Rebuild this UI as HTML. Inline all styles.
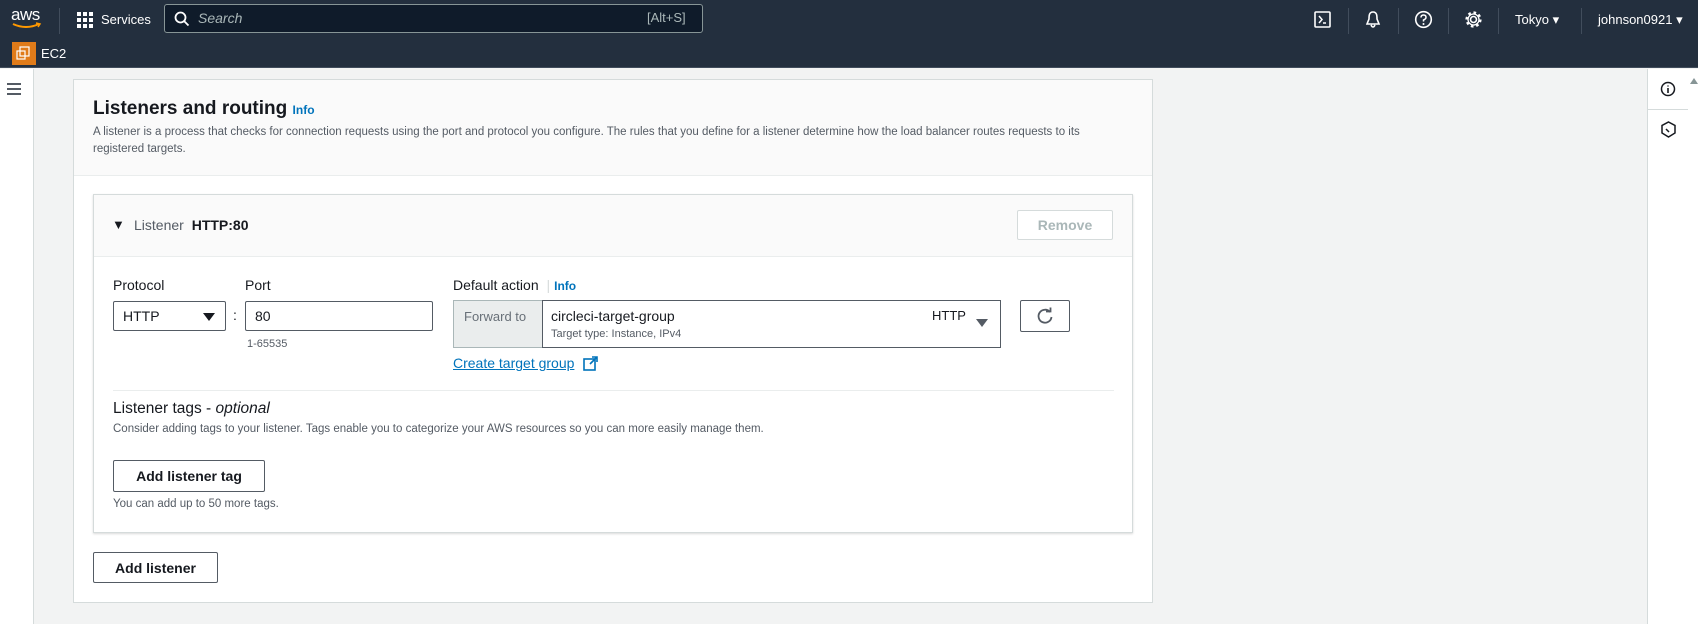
<!DOCTYPE html>
<html><head><meta charset="utf-8"><style>
*{box-sizing:border-box;margin:0;padding:0}
body{width:1698px;height:624px;overflow:hidden;background:#f2f3f3;font-family:"Liberation Sans",sans-serif;color:#16191f;position:relative;font-size:14px}
.a{position:absolute}
.nav{left:0;top:0;width:1698px;height:43px;background:#232f3e}
.nav2{left:0;top:43px;width:1698px;height:25px;background:#232f3e;border-bottom:1px solid #414d5c}
.w{color:#fff}
.btn{position:absolute;border:1px solid #545b64;border-radius:2px;background:#fff;font-weight:bold;color:#545b64;display:flex;align-items:center;justify-content:center;font-size:14px}
.lbl{font-size:14px;color:#16191f}
.inp{position:absolute;border:1px solid #aab7b8;border-radius:2px;background:#fff;padding-left:9px;display:flex;align-items:center;font-size:14px}
.info{color:#0073bb;font-weight:bold;font-size:12px}
.sep{position:absolute;width:1px;height:26px;background:#414d5c;top:8px}
</style></head><body>
<div class="a nav"></div>
<div class="a nav2"></div>
<div class="a w" style="left:11px;top:5px;font-size:17px;letter-spacing:-0.5px">aws</div>
<svg class="a" style="left:11px;top:22px" width="32" height="8"><path d="M2 2 Q15 8 28 2" stroke="#ff9900" stroke-width="2" fill="none"/><path d="M25 1 L29 2 L27 5" stroke="#ff9900" stroke-width="1.5" fill="none"/></svg>
<div class="sep" style="left:59px"></div>
<svg class="a" style="left:77px;top:12px" width="16" height="16" fill="#fff"><rect x="0" y="0" width="4" height="4"/><rect x="6" y="0" width="4" height="4"/><rect x="12" y="0" width="4" height="4"/><rect x="0" y="6" width="4" height="4"/><rect x="6" y="6" width="4" height="4"/><rect x="12" y="6" width="4" height="4"/><rect x="0" y="12" width="4" height="4"/><rect x="6" y="12" width="4" height="4"/><rect x="12" y="12" width="4" height="4"/></svg>
<div class="a w" style="left:101px;top:12px;font-size:13px">Services</div>
<div class="a" style="left:164px;top:4px;width:539px;height:29px;border:1px solid #879596;border-radius:3px;background:#0f1b2a"></div>
<svg class="a" style="left:174px;top:11px" width="16" height="16"><circle cx="6.5" cy="6.5" r="5" stroke="#fff" stroke-width="1.8" fill="none"/><path d="M10 10 L14.5 14.5" stroke="#fff" stroke-width="1.8"/></svg>
<div class="a" style="left:198px;top:10px;color:#aab7b8;font-style:italic;font-size:14px">Search</div>
<div class="a" style="left:647px;top:10px;color:#aab7b8;font-size:13px">[Alt+S]</div>
<svg class="a" style="left:1314px;top:11px" width="18" height="18"><rect x="1" y="1" width="15" height="15" stroke="#fff" stroke-width="1.6" fill="none" rx="1"/><path d="M5 5 L8 8.5 L5 12 M9 12 H12" stroke="#fff" stroke-width="1.5" fill="none"/></svg>
<div class="sep" style="left:1348px"></div>
<svg class="a" style="left:1364px;top:10px" width="18" height="20"><path d="M9 2 C5 2 5 6 5 9 L3 14 H15 L13 9 C13 6 13 2 9 2 Z M7 15 Q9 19 11 15" stroke="#fff" stroke-width="1.6" fill="none"/></svg>
<div class="sep" style="left:1398px"></div>
<svg class="a" style="left:1414px;top:10px" width="19" height="19"><circle cx="9.5" cy="9.5" r="7.8" stroke="#fff" stroke-width="1.6" fill="none"/><path d="M7 7.5 Q7 5 9.5 5 Q12 5 12 7.3 Q12 9 9.5 10 V11.5" stroke="#fff" stroke-width="1.5" fill="none"/><circle cx="9.5" cy="14" r="1" fill="#fff"/></svg>
<div class="sep" style="left:1448px"></div>
<svg class="a" style="left:1464px;top:10px" width="19" height="19"><circle cx="9.5" cy="9.5" r="3" stroke="#fff" stroke-width="1.6" fill="none"/><circle cx="9.5" cy="9.5" r="6.8" stroke="#fff" stroke-width="2.6" stroke-dasharray="2.6 2.7" fill="none"/><circle cx="9.5" cy="9.5" r="5.5" stroke="#fff" stroke-width="1.3" fill="none"/></svg>
<div class="sep" style="left:1498px"></div>
<div class="a w" style="left:1515px;top:12px;font-size:13px">Tokyo ▾</div>
<div class="sep" style="left:1581px"></div>
<div class="a w" style="left:1598px;top:12px;font-size:13px">johnson0921 ▾</div>
<div class="a" style="left:12px;top:42px;width:24px;height:23px;background:#e07b19"></div>
<svg class="a" style="left:15px;top:45px" width="18" height="17"><rect x="5" y="2" width="9" height="9" stroke="#fff" stroke-width="1.2" fill="none"/><rect x="2" y="6" width="8" height="8" stroke="#fff" stroke-width="1.2" fill="none"/></svg>
<div class="a w" style="left:41px;top:46px;font-size:13px">EC2</div>

<div class="a" style="left:0;top:69px;width:34px;height:555px;background:#fff;border-right:1px solid #d5dbdb"></div>
<div class="a" style="left:7px;top:83px;width:14px;height:2px;background:#545b64;box-shadow:0 5px 0 #545b64,0 10px 0 #545b64"></div>
<div class="a" style="left:1647px;top:69px;width:51px;height:555px;background:#fff;border-left:1px solid #d5dbdb"></div>
<div class="a" style="left:1648px;top:109px;width:40px;height:1px;background:#d5dbdb"></div>
<svg class="a" style="left:1660px;top:81px" width="16" height="16"><circle cx="8" cy="8" r="6.5" stroke="#16191f" stroke-width="1.5" fill="none"/><path d="M8 7 V12 M8 4.5 V5.5" stroke="#16191f" stroke-width="1.6"/></svg>
<svg class="a" style="left:1661px;top:121px" width="15" height="17"><path d="M7.5 1 L14 4.5 V12 L7.5 16 L1 12 V4.5 Z" stroke="#16191f" stroke-width="1.5" fill="none"/><path d="M5 8 L8 11" stroke="#16191f" stroke-width="1.5"/></svg>
<div class="a" style="left:1690px;top:78px;width:0;height:0;border-left:4px solid transparent;border-right:4px solid transparent;border-bottom:6px solid #879596"></div>

<div class="a" style="left:73px;top:79px;width:1080px;height:524px;background:#fff;border:1px solid #d5dbdb"></div>
<div class="a" style="left:74px;top:80px;width:1078px;height:96px;background:#fafafa;border-bottom:1px solid #eaeded"></div>
<div class="a" style="left:93px;top:98px;font-size:19px;font-weight:bold">Listeners and routing <span class="info" style="font-size:12px">Info</span></div>
<div class="a" style="left:93px;top:124px;font-size:11.5px;line-height:17px;width:995px;color:#545b64">A listener is a process that checks for connection requests using the port and protocol you configure. The rules that you define for a listener determine how the load balancer routes requests to its registered targets.</div>

<div class="a" style="left:93px;top:194px;width:1040px;height:339px;border:1px solid #d5dbdb;box-shadow:0 1px 2px rgba(0,0,0,.15);background:#fff"></div>
<div class="a" style="left:94px;top:195px;width:1038px;height:62px;background:#fafafa;border-bottom:1px solid #eaeded"></div>
<div class="a" style="left:112px;top:217px;font-size:13px">▼</div>
<div class="a" style="left:134px;top:217px;font-size:14px;color:#545b64">Listener <b style="color:#16191f;margin-left:4px">HTTP:80</b></div>
<div class="btn" style="left:1017px;top:210px;width:96px;height:30px;border-color:#d5dbdb;color:#aab7b8">Remove</div>

<div class="a lbl" style="left:113px;top:277px">Protocol</div>
<div class="a lbl" style="left:245px;top:277px">Port</div>
<div class="inp" style="left:113px;top:301px;width:113px;height:30px;border-color:#545b64">HTTP</div>
<div class="a" style="left:203px;top:313px;border-left:6px solid transparent;border-right:6px solid transparent;border-top:8px solid #16191f"></div>
<div class="a" style="left:233px;top:307px;font-size:14px">:</div>
<div class="inp" style="left:245px;top:301px;width:188px;height:30px;border-color:#545b64">80</div>
<div class="a" style="left:247px;top:338px;font-size:11px;color:#545b64">1-65535</div>

<div class="a lbl" style="left:453px;top:277px">Default action <span style="color:#d5dbdb;margin:0 4px">|</span><span class="info">Info</span></div>
<div class="a" style="left:453px;top:300px;width:90px;height:48px;background:#eaeded;border:1px solid #aab7b8;color:#687078;font-size:13px;padding:8px 0 0 10px">Forward to</div>
<div class="a" style="left:542px;top:300px;width:459px;height:48px;border:1px solid #545b64;background:#fff"></div>
<div class="a" style="left:551px;top:308px;font-size:14px">circleci-target-group</div>
<div class="a" style="left:551px;top:328px;font-size:11px;color:#545b64">Target type: Instance, IPv4</div>
<div class="a" style="left:932px;top:308px;font-size:13px">HTTP</div>
<div class="a" style="left:976px;top:319px;border-left:6px solid transparent;border-right:6px solid transparent;border-top:8px solid #545b64"></div>
<div class="btn" style="left:1020px;top:300px;width:50px;height:32px"><svg width="18" height="18"><path d="M14 5 A6.5 6.5 0 1 0 15.5 10" stroke="#545b64" stroke-width="1.8" fill="none"/><path d="M10 4.5 H14.5 V0.5" stroke="#545b64" stroke-width="1.8" fill="none"/></svg></div>
<div class="a" style="left:453px;top:355px;font-size:14px;color:#0073bb;text-decoration:underline">Create target group</div>
<svg class="a" style="left:583px;top:356px" width="15" height="15"><rect x="1" y="3" width="11" height="11" stroke="#0073bb" stroke-width="1.6" fill="none"/><path d="M7 8 L13.5 1.5 M9 1 H14 V6" stroke="#0073bb" stroke-width="1.6" fill="none"/></svg>

<div class="a" style="left:113px;top:390px;width:1001px;height:1px;background:#eaeded"></div>
<div class="a" style="left:113px;top:400px;font-size:15.5px">Listener tags - <i>optional</i></div>
<div class="a" style="left:113px;top:423px;font-size:11.5px;color:#545b64">Consider adding tags to your listener. Tags enable you to categorize your AWS resources so you can more easily manage them.</div>
<div class="btn" style="left:113px;top:460px;width:152px;height:32px;color:#16191f">Add listener tag</div>
<div class="a" style="left:113px;top:498px;font-size:11.5px;color:#545b64">You can add up to 50 more tags.</div>
<div class="btn" style="left:93px;top:552px;width:125px;height:31px;color:#16191f">Add listener</div>
</body></html>
